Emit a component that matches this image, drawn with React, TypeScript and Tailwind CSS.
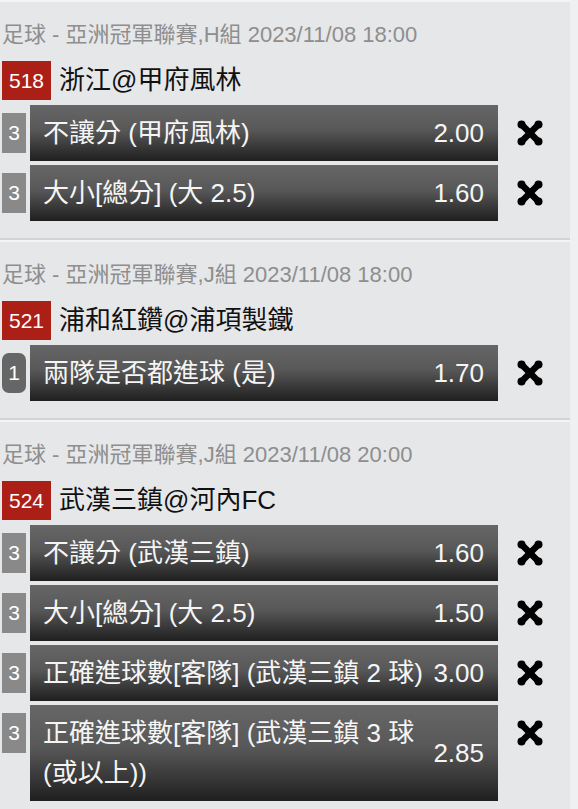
const matches = [
  {
    league: "足球 - 亞洲冠軍聯賽,H組 2023/11/08 18:00",
    code: "518",
    teams: "浙江@甲府風林",
    bets: [
      { count: "3", label: "不讓分 (甲府風林)", odds: "2.00" },
      { count: "3", label: "大小[總分] (大 2.5)", odds: "1.60" },
    ],
  },
  {
    league: "足球 - 亞洲冠軍聯賽,J組 2023/11/08 18:00",
    code: "521",
    teams: "浦和紅鑽@浦項製鐵",
    bets: [{ count: "1", label: "兩隊是否都進球 (是)", odds: "1.70", single: true }],
  },
  {
    league: "足球 - 亞洲冠軍聯賽,J組 2023/11/08 20:00",
    code: "524",
    teams: "武漢三鎮@河內FC",
    bets: [
      { count: "3", label: "不讓分 (武漢三鎮)", odds: "1.60" },
      { count: "3", label: "大小[總分] (大 2.5)", odds: "1.50" },
      { count: "3", label: "正確進球數[客隊] (武漢三鎮 2 球)", odds: "3.00" },
      { count: "3", label: "正確進球數[客隊] (武漢三鎮 3 球 (或以上))", odds: "2.85" },
    ],
  },
];

function RemoveIcon() {
  return (
    <svg width="26" height="26" viewBox="0 0 26 26" className="block">
      <g stroke="#000" strokeWidth="6.5" strokeLinecap="round">
        <line x1="5" y1="5" x2="21" y2="21" />
        <line x1="21" y1="5" x2="5" y2="21" />
      </g>
      <g fill="#000">
        <circle cx="4.5" cy="4.5" r="4" />
        <circle cx="21.5" cy="4.5" r="4" />
        <circle cx="4.5" cy="21.5" r="4" />
        <circle cx="21.5" cy="21.5" r="4" />
      </g>
    </svg>
  );
}

export default function App() {
  return (
    <div className="min-h-screen bg-[#eef0f1] font-['Liberation_Sans','Noto_Sans_CJK_TC',sans-serif]">
      <div className="w-[570px]">
        {matches.map((m) => (
          <section
            key={m.code}
            className="bg-[#e6e7e9] border-t-2 border-t-[#f3f4f5] border-b-2 border-b-[#d2d3d5] pt-[18px] pb-[17px] pl-[2px]"
          >
            {/* league / kickoff */}
            <div className="h-[30px] leading-[30px] text-[22px] text-[#8e8e8e] whitespace-nowrap">
              {m.league}
            </div>

            {/* match */}
            <div className="mt-[11px] flex items-center h-[39px]">
              <div className="h-[39px] w-[49px] bg-[#ab1f17] text-white text-[21px] flex items-center justify-center">
                {m.code}
              </div>
              <div className="ml-[8px] text-[26px] text-[#111]">{m.teams}</div>
            </div>

            {/* bets */}
            <div className="mt-[5px] flex flex-col gap-[4px]">
              {m.bets.map((b, i) => (
                <div key={i} className="flex items-start">
                  <div
                    className={
                      b.single
                        ? "mt-[8px] h-[40px] w-[24px] shrink-0 rounded-[7px] bg-[#666666] text-white text-[21px] flex items-center justify-center"
                        : "mt-[8px] h-[40px] w-[24px] shrink-0 bg-[#898989] text-white text-[21px] flex items-center justify-center"
                    }
                  >
                    {b.count}
                  </div>
                  <div className="ml-[4px] w-[468px] min-h-[56px] py-2 pl-[13px] pr-[14px] flex items-center gap-[10px] text-[26px] leading-[40px] text-[#f5f5f5] bg-[linear-gradient(to_bottom,#676767_0%,#575757_45%,#1f1f1f_100%)]">
                    <div className="flex-1">{b.label}</div>
                    <div className="shrink-0">{b.odds}</div>
                  </div>
                  <div className="ml-[19px] mt-[15px]">
                    <RemoveIcon />
                  </div>
                </div>
              ))}
            </div>
          </section>
        ))}
      </div>
    </div>
  );
}
